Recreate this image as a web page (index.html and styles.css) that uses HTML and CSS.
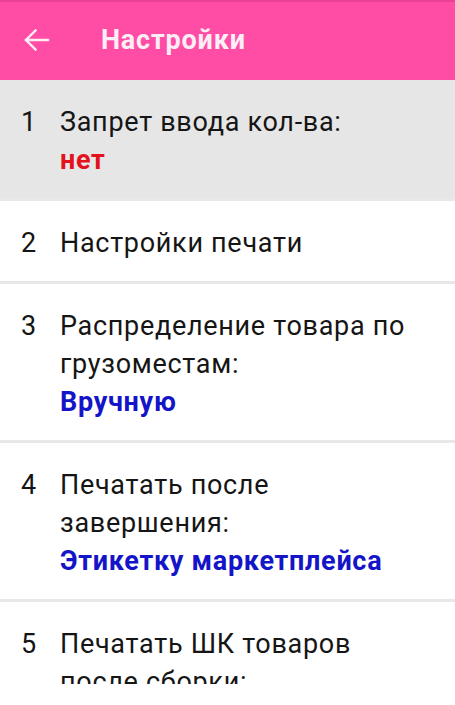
FILE: index.html
```html
<!DOCTYPE html>
<html lang="ru">
<head>
<meta charset="utf-8">
<title>Настройки</title>
<link rel="stylesheet" href="styles.css">
</head>
<body>
<div class="app">
  <header class="toolbar">
    <span class="back" aria-label="Назад">
      <svg width="26" height="22" viewBox="0 0 26 22"><path d="M2 11H24M11.5 1.5L2 11L11.5 20.5" fill="none" stroke="currentColor" stroke-width="2.4" stroke-linecap="square" stroke-linejoin="miter"/></svg>
    </span>
    <h1 class="title">Настройки</h1>
  </header>
  <ul class="list">
    <li class="item selected">
      <span class="num">1</span>
      <div class="body">
        <div class="label">Запрет ввода кол-ва:</div>
        <div class="value red">нет</div>
      </div>
    </li>
    <li class="item">
      <span class="num">2</span>
      <div class="body">
        <div class="label">Настройки печати</div>
      </div>
    </li>
    <li class="item">
      <span class="num">3</span>
      <div class="body">
        <div class="label">Распределение товара по грузоместам:</div>
        <div class="value blue">Вручную</div>
      </div>
    </li>
    <li class="item">
      <span class="num">4</span>
      <div class="body">
        <div class="label">Печатать после завершения:</div>
        <div class="value blue">Этикетку маркетплейса</div>
      </div>
    </li>
    <li class="item">
      <span class="num">5</span>
      <div class="body">
        <div class="label">Печатать ШК товаров после сборки:</div>
        <div class="value blue">Нет</div>
      </div>
    </li>
  </ul>
</div>
</body>
</html>
```

FILE: styles.css
```css
* { box-sizing: border-box; }
html, body { margin: 0; padding: 0; background: #ffffff; }
body { font-family: Roboto, "Noto Sans", "Liberation Sans", sans-serif; }
.app { width: 455px; height: 705px; background: #fff; }
.toolbar {
  height: 80px;
  background: #ff4da5;
  border-top: 2px solid #ea4196;
  display: flex;
  align-items: center;
  padding-left: 24px;
  color: #fdeef6;
}
.back { display: flex; width: 26px; height: 22px; margin-top: -2px; }
.title {
  margin: 0 0 0 51px;
  font-size: 27px;
  font-weight: 700;
  letter-spacing: 0.8px;
  margin-top: -2px;
}
.list {
  list-style: none;
  margin: 0;
  padding: 0;
  height: 604px;
  overflow: hidden;
}
.item {
  display: flex;
  padding: 23px 40px 19px 21px;
  border-bottom: 3px solid #e8e8e8;
  font-size: 27px;
  letter-spacing: 0.7px;
  line-height: 38px;
  color: #151515;
}
.item.selected { background: #e6e6e6; }
.num { width: 39px; flex: none; }
.body { flex: 1; }
.value { font-weight: 700; }
.red { color: #e3121c; }
.blue { color: #1414c8; }
```
